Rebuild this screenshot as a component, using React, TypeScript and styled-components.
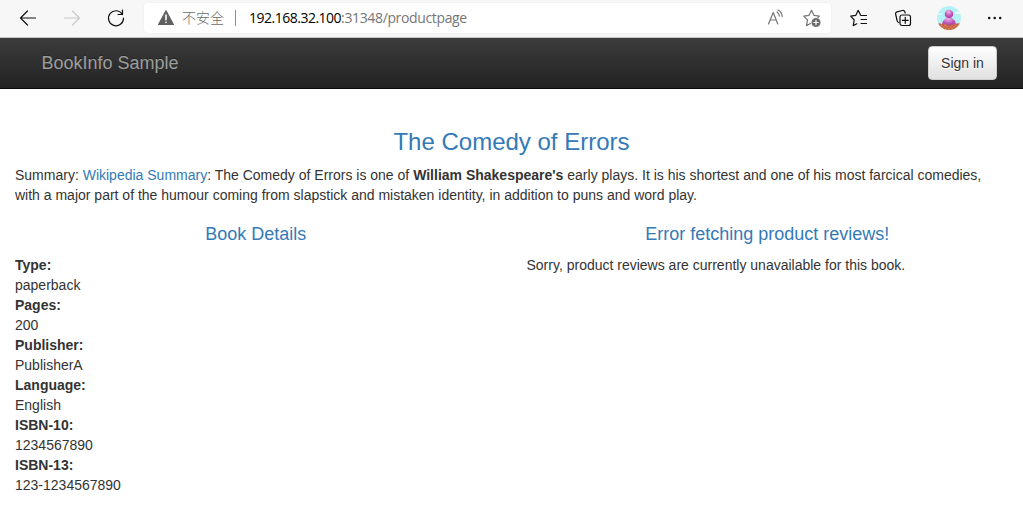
import React from "react";
import styled, { createGlobalStyle } from "styled-components";

const Global = createGlobalStyle`
  *, *::before, *::after { box-sizing: border-box; }
  body {
    margin: 0;
    background: #fff;
    color: #333;
    font: 14px/20px "Liberation Sans", Arial, sans-serif;
    overflow: hidden;
  }
`;

const Toolbar = styled.header`
  display: flex;
  align-items: center;
  height: 38px;
  padding: 0 8px 2px 18px;
  background: #f7f7f7;
  border-bottom: 1px solid #c4c4c4;
`;

const NavButtons = styled.div`
  display: flex;
  gap: 24px;
  width: 126px;
`;

const Icon = styled.svg<{ $color?: string; $weight?: number; $width?: number }>`
  display: block;
  flex: none;
  width: ${(p) => p.$width ?? 20}px;
  height: 20px;
  fill: none;
  stroke: ${(p) => p.$color ?? "#111"};
  stroke-width: ${(p) => p.$weight ?? 1.2};
  stroke-linecap: round;
  stroke-linejoin: round;
`;

const AddressBar = styled.div`
  display: flex;
  flex: none;
  align-items: center;
  width: 687px;
  height: 30px;
  padding: 0 9px 0 13px;
  border-radius: 4px;
  background: #fff;
  box-shadow: 0 0 2px rgba(0, 0, 0, 0.08);
  font-family: "Open Sans", "Noto Sans CJK SC", sans-serif;
`;

const Security = styled.span`
  margin-left: 7px;
  width: 53px;
  padding-bottom: 2px;
  color: #6b6b6b;
  font: 300 14px/20px "Noto Sans CJK SC", sans-serif;
`;

const Divider = styled.span`
  width: 1px;
  height: 16px;
  background: #8b8b8b;
`;

const Url = styled.span`
  flex: 1;
  margin-left: 13px;
  color: #767676;
  font-size: 14px;
  letter-spacing: -0.36px;
  white-space: nowrap;
`;

const Host = styled.span`
  color: #000;
  letter-spacing: -0.5px;
`;

const PageActions = styled.div`
  display: flex;
  gap: 16px;
`;

const BrowserActions = styled.div`
  display: flex;
  align-items: center;
  gap: 25px;
  margin-left: 18px;
`;

const Avatar = styled.svg`
  display: block;
  flex: none;
  width: 24px;
  height: 24px;
  margin: 0 -1px 0 -2px;
`;

const Navbar = styled.nav`
  display: flex;
  align-items: center;
  justify-content: space-between;
  height: 51px;
  padding: 0 26px 0 41.5px;
  border-bottom: 1px solid #080808;
  background: linear-gradient(#3c3c3c, #222);
`;

const Brand = styled.a`
  color: #9d9d9d;
  font-size: 18px;
  text-shadow: 0 -1px 0 rgba(0, 0, 0, 0.25);
`;

const SignIn = styled.button`
  width: 69px;
  height: 34px;
  padding: 0;
  border: 1px solid #ccc;
  border-radius: 4px;
  background: linear-gradient(#fff, #e0e0e0);
  color: #333;
  font: 14px/20px "Liberation Sans", Arial, sans-serif;
  text-shadow: 0 1px 0 #fff;
`;

const Page = styled.main`
  padding-top: 40px;
`;

const Title = styled.h3`
  margin: 0 0 10px;
  color: #337ab7;
  font-size: 24px;
  font-weight: 500;
  line-height: 26.4px;
  text-align: center;
`;

const Summary = styled.p`
  margin: 0 0 20px;
  padding: 0 15px;
`;

const Link = styled.a`
  color: #337ab7;
`;

const Columns = styled.div`
  display: grid;
  grid-template-columns: 1fr 1fr;
`;

const Column = styled.section`
  padding: 0 15px;
`;

const Heading = styled.h4`
  margin: 0 0 10px;
  color: #337ab7;
  font-size: 18px;
  font-weight: 500;
  line-height: 19.8px;
  text-align: center;
`;

const Details = styled.dl`
  margin: 0;
`;

const Term = styled.dt`
  font-weight: 700;
`;

const Value = styled.dd`
  margin: 0;
`;

const Message = styled.p`
  margin: 0;
`;

const details = [
  ["Type:", "paperback"],
  ["Pages:", "200"],
  ["Publisher:", "PublisherA"],
  ["Language:", "English"],
  ["ISBN-10:", "1234567890"],
  ["ISBN-13:", "123-1234567890"],
];

export default function App() {
  return (
    <>
      <Global />
      <Toolbar>
        <NavButtons>
          <Icon viewBox="0 0 20 20"><path d="M17.5 10H2.5M9.5 3l-7 7 7 7" /></Icon>
          <Icon viewBox="0 0 20 20" $color="#cacaca"><path d="M2.5 10h15M10.5 3l7 7-7 7" /></Icon>
          <Icon viewBox="0 0 20 20"><path d="M16.5 6.5A7.5 7.5 0 1 0 17.5 10M16.5 2v4.500H12" /></Icon>
        </NavButtons>
        <AddressBar>
          <Icon viewBox="1 0 18 20" $width={18} $color="#606060">
            <path d="M10 2.8L17.4 16.5H2.6z" fill="#606060" />
            <path d="M10 7v4.8M10 14.2v.3" stroke="#fff" strokeWidth="1.6" />
          </Icon>
          <Security>不安全</Security>
          <Divider />
          <Url><Host>192.168.32.100</Host>:31348/productpage</Url>
          <PageActions>
            <Icon viewBox="0 0 20 20" $color="#767676">
              <path d="M2.5 16L7.2 4.5l4.6 11.5M4.2 12h6M11 4c1.4 1 2.2 2.3 2.4 4M12 2c2.6 1.3 4 3.5 4.2 6.5" />
            </Icon>
            <Icon viewBox="0 0 20 20" $color="#767676">
              <path d="M8.5 15.5l-4 2.1 1-5.6L1.7 8.2l5.2-.8L9.5 2.300l2.500 5.100 5.300.8-1.400 1.500" />
              <circle cx="14" cy="14.5" r="4" fill="#666" />
              <path d="M14 12.3v4.4M11.8 14.5h4.4" stroke="#fff" />
            </Icon>
          </PageActions>
        </AddressBar>
        <BrowserActions>
          <Icon viewBox="0 0 20 20">
            <path d="M7.8 15.8l-3.6 1.800 1-5.600-3.500-3.800 5-.8L9.200 2.300l2.300 4.600M12 7.500h5.500M12 11.500h5.500M12 15.500h5.500" />
          </Icon>
          <Icon viewBox="-1 0 20 20">
            <path d="M4 14.500Q2.500 14.500 2.200 13L.6 6Q.3 4.300 2 3.800L7.500 2.500q1.700-.3 2.300 1.300L10.200 5" />
            <rect x="5" y="7" width="10.500" height="10.500" rx="2" />
            <path d="M10.250 9.300v6M7.250 12.300h6" />
          </Icon>
          <Avatar viewBox="0 0 24 24">
            <defs>
              <clipPath id="face"><circle cx="12" cy="12" r="12" /></clipPath>
              <radialGradient id="figure" cx="45%" cy="25%">
                <stop offset="0" stopColor="#f0b6e9" />
                <stop offset="1" stopColor="#b84daf" />
              </radialGradient>
            </defs>
            <g clipPath="url(#face)">
              <path fill="#b5f2f8" d="M0 0h24v24H0z" />
              <path fill="#e9fbfc" d="M0 8q3-2 6 1H0zM18 6q4-2 6 2h-6z" />
              <path fill="url(#figure)" d="M5 19q0-4 3-6 2-1 2.500-3h3q.5 2 2.500 3 3 2 3 6-7 3-14 0z" />
              <circle cx="12" cy="8" r="4.3" fill="url(#figure)" />
              <path fill="#d87850" d="M0 18l3-1 3 2 3-1 3 2 3-1 3-1 3-1 3 1v6H0z" />
              <path stroke="#a94e27" fill="none" strokeDasharray="1.5 2" d="M2 19h20M4 21h16M6 23h12" />
            </g>
          </Avatar>
          <Icon viewBox="0 0 20 20" $weight={2.5}><path d="M4.200 10h.01M9.700 10h.01M15.200 10h.01" /></Icon>
        </BrowserActions>
      </Toolbar>
      <Navbar>
        <Brand>BookInfo Sample</Brand>
        <SignIn>Sign in</SignIn>
      </Navbar>
      <Page>
        <Title>The Comedy of Errors</Title>
        <Summary>
          Summary: <Link>Wikipedia Summary</Link>: The Comedy of Errors is one of <b>William Shakespeare's</b> early
          plays. It is his shortest and one of his most farcical comedies, with a major part of the humour coming from
          slapstick and mistaken identity, in addition to puns and word play.
        </Summary>
        <Columns>
          <Column>
            <Heading>Book Details</Heading>
            <Details>
              {details.map(([term, value]) => (
                <React.Fragment key={term}>
                  <Term>{term}</Term>
                  <Value>{value}</Value>
                </React.Fragment>
              ))}
            </Details>
          </Column>
          <Column>
            <Heading>Error fetching product reviews!</Heading>
            <Message>Sorry, product reviews are currently unavailable for this book.</Message>
          </Column>
        </Columns>
      </Page>
    </>
  );
}
